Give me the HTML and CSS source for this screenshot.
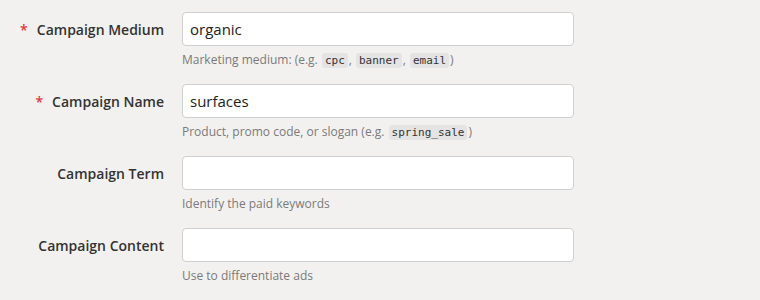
FILE: index.html
```html
<!DOCTYPE html>
<html lang="en">

<head>
    <meta charset="UTF-8">
    <meta name="viewport" content="width=device-width, initial-scale=1.0">
    <title>Campaign URL Builder</title>
    <link rel="stylesheet" href="styles.css">
</head>

<body>
    <form class="campaign-form">
        <div class="field-row">
            <label class="field-label" for="utm-medium"><span class="required">*</span>Campaign Medium</label>
            <div class="field-body">
                <input type="text" id="utm-medium" class="text-input" value="organic">
                <p class="help-text">Marketing medium: (e.g. <code>cpc</code>, <code>banner</code>, <code>email</code>)</p>
            </div>
        </div>

        <div class="field-row">
            <label class="field-label" for="utm-name"><span class="required">*</span>Campaign Name</label>
            <div class="field-body">
                <input type="text" id="utm-name" class="text-input" value="surfaces">
                <p class="help-text">Product, promo code, or slogan (e.g. <code>spring_sale</code>)</p>
            </div>
        </div>

        <div class="field-row">
            <label class="field-label" for="utm-term">Campaign Term</label>
            <div class="field-body">
                <input type="text" id="utm-term" class="text-input">
                <p class="help-text">Identify the paid keywords</p>
            </div>
        </div>

        <div class="field-row">
            <label class="field-label" for="utm-content">Campaign Content</label>
            <div class="field-body">
                <input type="text" id="utm-content" class="text-input">
                <p class="help-text">Use to differentiate ads</p>
            </div>
        </div>
    </form>
</body>

</html>
```

FILE: styles.css
```css
body {
    margin: 0;
    padding: 0;
    font-family: "Open Sans", "Noto Sans", sans-serif;
    background-color: #f2f1ef;
    color: #333333;
}

.campaign-form {
    padding-top: 12px;
}

.field-row {
    display: grid;
    grid-template-columns: 164px 392px;
    column-gap: 18px;
    margin-bottom: 16px;
}

.field-label {
    height: 34px;
    display: flex;
    align-items: center;
    justify-content: flex-end;
    font-size: 14px;
    font-weight: 600;
    color: #333333;
}

.required {
    color: #e2383d;
    margin-right: 9px;
}

.text-input {
    display: block;
    box-sizing: border-box;
    width: 100%;
    height: 34px;
    padding: 0 7px;
    border: 1px solid #cfcfcf;
    border-radius: 4px;
    background-color: #ffffff;
    font-family: "Open Sans", "Noto Sans", sans-serif;
    font-size: 15px;
    color: #222222;
    outline: none;
}

.help-text {
    margin: 5px 0 0 0;
    font-size: 12px;
    line-height: 17px;
    color: #7a7a7a;
}

.help-text code {
    display: inline-block;
    font-family: "DejaVu Sans Mono", monospace;
    font-size: 11px;
    line-height: 15px;
    color: #333333;
    background-color: #e4e4e4;
    border-radius: 3px;
    padding: 0 3px;
    margin: 0 1px;
}
```
